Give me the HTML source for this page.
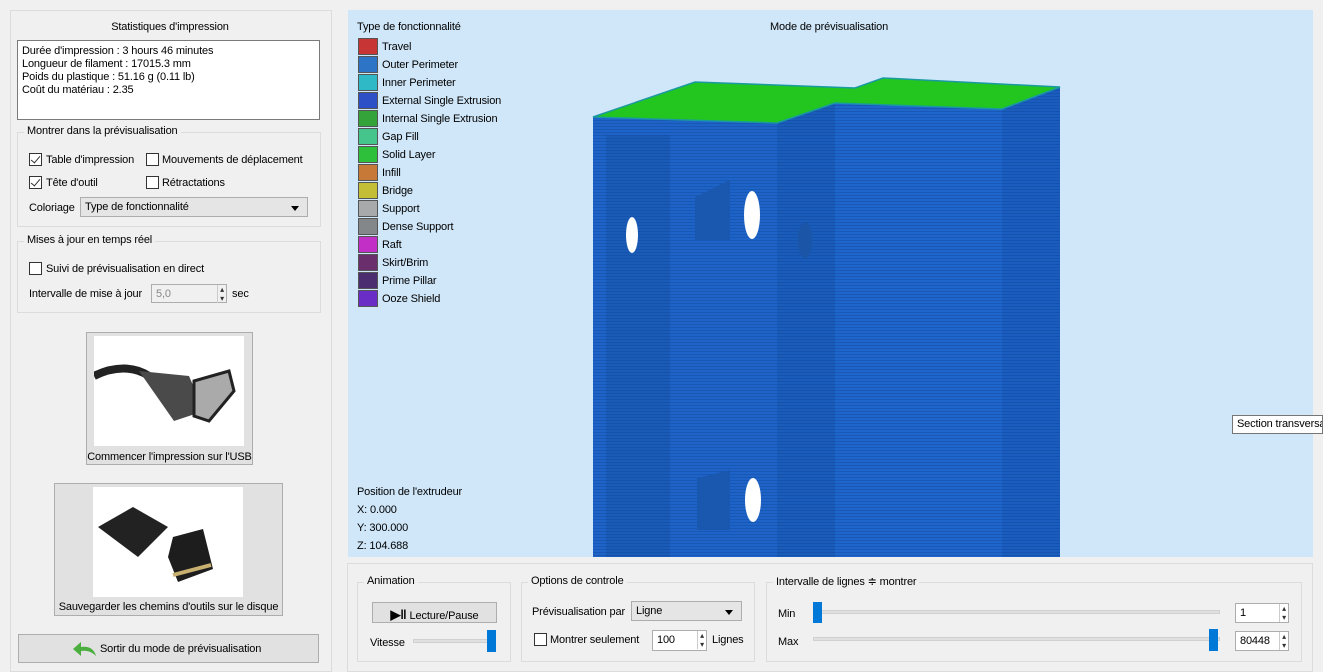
<!DOCTYPE html>
<html><head><meta charset="utf-8"><style>
*{box-sizing:border-box}
body{margin:0;width:1323px;height:672px;background:#f0f0f0;font-family:"Liberation Sans",sans-serif;font-size:11px;letter-spacing:-0.15px;color:#000;position:relative;overflow:hidden}
.a{position:absolute;white-space:nowrap}
.grp{position:absolute;border:1px solid #dcdcdc}
.gl{position:absolute;background:#f0f0f0;padding:0 3px;top:-8px;left:6px;white-space:nowrap}
.cb{position:absolute;width:13px;height:13px;border:1px solid #333;background:#fff}
.cb.on::after{content:"";position:absolute;left:3px;top:0px;width:4px;height:8px;border:solid #333;border-width:0 1.5px 1.5px 0;transform:rotate(40deg)}
.sel{position:absolute;border:1px solid #adadad;background:#e5e5e5;padding:3px 4px}
.sel::after{content:"";position:absolute;right:8px;top:8px;border:4px solid transparent;border-top:5px solid #000;border-bottom:0}
.spin{position:absolute;border:1px solid #adadad;background:#fff;padding:3px 4px}
.spin::after{content:"▴\A▾";white-space:pre;position:absolute;right:2px;top:0;font-size:8px;line-height:9px;border-left:1px solid #ccc;padding-left:2px;color:#333}
.leg{position:absolute;left:358px;width:20px;height:17px;border:1px solid #555}
.lt{position:absolute;left:382px;white-space:nowrap}
</style></head><body>
<div class="a" style="left:10px;top:10px;width:322px;height:662px;border:1px solid #dcdcdc"></div>
<div class="a" style="left:0;top:21px;width:340px;text-align:center">Statistiques d'impression</div>
<div class="a" style="left:17px;top:40px;width:303px;height:80px;border:1px solid #7a7a7a;background:#fff;padding:4px 4px;line-height:13px">Durée d'impression : 3 hours 46 minutes<br>Longueur de filament : 17015.3 mm<br>Poids du plastique : 51.16 g (0.11 lb)<br>Coût du matériau : 2.35</div>
<div class="grp" style="left:17px;top:132px;width:304px;height:95px"><span class="gl">Montrer dans la prévisualisation</span></div>
<div class="cb on" style="left:29px;top:153px"></div><div class="a" style="left:46px;top:154px">Table d'impression</div>
<div class="cb" style="left:146px;top:153px"></div><div class="a" style="left:162px;top:154px">Mouvements de déplacement</div>
<div class="cb on" style="left:29px;top:176px"></div><div class="a" style="left:46px;top:177px">Tête d'outil</div>
<div class="cb" style="left:146px;top:176px"></div><div class="a" style="left:162px;top:177px">Rétractations</div>
<div class="a" style="left:29px;top:202px">Coloriage</div>
<div class="sel" style="left:80px;top:197px;width:228px;height:20px">Type de fonctionnalité</div>
<div class="grp" style="left:17px;top:241px;width:304px;height:72px"><span class="gl">Mises à jour en temps réel</span></div>
<div class="cb" style="left:29px;top:262px"></div><div class="a" style="left:46px;top:263px">Suivi de prévisualisation en direct</div>
<div class="a" style="left:29px;top:288px">Intervalle de mise à jour</div>
<div class="spin" style="left:151px;top:284px;width:76px;height:19px;background:#f0f0f0;color:#888">5,0</div>
<div class="a" style="left:232px;top:288px">sec</div>
<div class="a" style="left:86px;top:332px;width:167px;height:133px;border:1px solid #adadad;background:#e1e1e1"></div>
<div class="a" style="left:94px;top:336px;width:150px;height:110px;background:#fff">
<svg width="150" height="110"><path d="M0 40 C20 30 40 30 55 40" stroke="#222" stroke-width="8" fill="none"/><path d="M45 35 L95 40 L110 75 L80 85 Z" fill="#4a4a4a"/><path d="M100 45 L135 35 L140 55 L115 85 L100 80Z" fill="#aaa" stroke="#222" stroke-width="3"/></svg></div>
<div class="a" style="left:86px;top:451px;width:167px;text-align:center">Commencer l'impression sur l'USB</div>
<div class="a" style="left:54px;top:483px;width:229px;height:133px;border:1px solid #adadad;background:#e1e1e1"></div>
<div class="a" style="left:93px;top:487px;width:150px;height:110px;background:#fff">
<svg width="150" height="110"><path d="M5 40 L40 20 L75 40 L45 70 Z" fill="#222"/><path d="M80 50 L110 42 L120 82 L85 95 L75 70Z" fill="#1d1d1d"/><path d="M80 88 L118 78" stroke="#c8b070" stroke-width="4"/></svg></div>
<div class="a" style="left:54px;top:601px;width:229px;text-align:center">Sauvegarder les chemins d'outils sur le disque</div>
<div class="a" style="left:18px;top:634px;width:301px;height:29px;border:1px solid #adadad;background:#e1e1e1"></div>
<svg class="a" style="left:72px;top:640px" width="26" height="18"><path d="M24 16 C22 8 16 6 9 7 L9 2 L1 9 L9 16 L9 11 C15 10 20 12 24 16Z" fill="#4cae3f"/></svg>
<div class="a" style="left:100px;top:643px">Sortir du mode de prévisualisation</div>

<div class="a" style="left:348px;top:10px;width:965px;height:547px;background:#d0e7f9"></div>
<div class="a" style="left:357px;top:21px">Type de fonctionnalité</div>
<div class="a" style="left:770px;top:21px">Mode de prévisualisation</div>
<div class="leg" style="top:38px;background:#c73535"></div><div class="lt" style="top:41px">Travel</div>
<div class="leg" style="top:56px;background:#2e74c6"></div><div class="lt" style="top:59px">Outer Perimeter</div>
<div class="leg" style="top:74px;background:#2fb9c6"></div><div class="lt" style="top:77px">Inner Perimeter</div>
<div class="leg" style="top:92px;background:#2e50c6"></div><div class="lt" style="top:95px">External Single Extrusion</div>
<div class="leg" style="top:110px;background:#34a33a"></div><div class="lt" style="top:113px">Internal Single Extrusion</div>
<div class="leg" style="top:128px;background:#45c48c"></div><div class="lt" style="top:131px">Gap Fill</div>
<div class="leg" style="top:146px;background:#2ec03a"></div><div class="lt" style="top:149px">Solid Layer</div>
<div class="leg" style="top:164px;background:#c77a37"></div><div class="lt" style="top:167px">Infill</div>
<div class="leg" style="top:182px;background:#c4be37"></div><div class="lt" style="top:185px">Bridge</div>
<div class="leg" style="top:200px;background:#a7a9ab"></div><div class="lt" style="top:203px">Support</div>
<div class="leg" style="top:218px;background:#84878a"></div><div class="lt" style="top:221px">Dense Support</div>
<div class="leg" style="top:236px;background:#c12fc6"></div><div class="lt" style="top:239px">Raft</div>
<div class="leg" style="top:254px;background:#6a2e6c"></div><div class="lt" style="top:257px">Skirt/Brim</div>
<div class="leg" style="top:272px;background:#4a2e70"></div><div class="lt" style="top:275px">Prime Pillar</div>
<div class="leg" style="top:290px;background:#6a2ec6"></div><div class="lt" style="top:293px">Ooze Shield</div>
<svg class="a" style="left:348px;top:10px" width="965" height="547">
<defs><pattern id="st" width="4" height="3" patternUnits="userSpaceOnUse"><rect width="4" height="1" fill="#0d3f8f" opacity="0.35"/></pattern></defs>
<g transform="translate(-348,-10)">
<polygon points="593,117 777,123 777,557 593,557" fill="#1e64c8"/>
<polygon points="777,123 835,103 835,557 777,557" fill="#1a5cba"/>
<polygon points="835,103 1002,109 1002,557 835,557" fill="#1e66cc"/>
<polygon points="1002,109 1060,87 1060,557 1002,557" fill="#1a5dbf"/>
<polygon points="606,135 670,135 670,557 606,557" fill="#1a5bb8"/>
<polygon points="593,117 777,123 835,103 1002,109 1060,87 1060,557 593,557" fill="url(#st)"/>
<polygon points="593,117 695,82 855,88 883,78 1060,87 1002,109 835,103 777,123" fill="#22c61e" stroke="#1a9aa0" stroke-width="1.5"/>
<ellipse cx="632" cy="235" rx="6" ry="18" fill="#fff"/>
<ellipse cx="752" cy="215" rx="8" ry="24" fill="#fff"/>
<ellipse cx="805" cy="240" rx="7" ry="18" fill="#1a55a8"/>
<ellipse cx="753" cy="500" rx="8" ry="22" fill="#fff"/>
<polygon points="695,197 730,180 730,240 695,240" fill="#1a58b0"/>
<polygon points="697,478 730,470 730,530 697,530" fill="#1a58b0"/>
</g></svg>
<div class="a" style="left:357px;top:483px;line-height:18px">Position de l'extrudeur<br>X: 0.000<br>Y: 300.000<br>Z: 104.688</div>
<div class="a" style="left:1232px;top:415px;width:91px;height:19px;border:1px solid #767676;background:#fff;padding:2px 4px;white-space:nowrap;overflow:hidden">Section transversale</div>

<div class="a" style="left:347px;top:563px;width:966px;height:109px;border:1px solid #dcdcdc"></div>
<div class="grp" style="left:357px;top:582px;width:154px;height:80px"><span class="gl">Animation</span></div>
<div class="a" style="left:372px;top:602px;width:125px;height:21px;border:1px solid #adadad;background:#e1e1e1;text-align:center;padding-top:4px"><b style="font-size:13px">▶‖</b> Lecture/Pause</div>
<div class="a" style="left:370px;top:637px">Vitesse</div>
<div class="a" style="left:413px;top:639px;width:82px;height:4px;background:#e0e0e0;border:1px solid #d0d0d0"></div>
<div class="a" style="left:487px;top:630px;width:9px;height:22px;background:#0078d7"></div>
<div class="grp" style="left:521px;top:582px;width:234px;height:80px"><span class="gl">Options de controle</span></div>
<div class="a" style="left:532px;top:606px">Prévisualisation par</div>
<div class="sel" style="left:631px;top:601px;width:111px;height:20px">Ligne</div>
<div class="cb" style="left:534px;top:633px"></div><div class="a" style="left:550px;top:634px">Montrer seulement</div>
<div class="spin" style="left:652px;top:630px;width:55px;height:21px">100</div>
<div class="a" style="left:712px;top:634px">Lignes</div>
<div class="grp" style="left:766px;top:582px;width:536px;height:80px"><span class="gl">Intervalle de lignes ≑ montrer</span></div>
<div class="a" style="left:778px;top:608px">Min</div>
<div class="a" style="left:815px;top:610px;width:405px;height:4px;background:#e0e0e0;border:1px solid #d0d0d0"></div>
<div class="a" style="left:813px;top:602px;width:9px;height:21px;background:#0078d7"></div>
<div class="spin" style="left:1235px;top:603px;width:54px;height:20px">1</div>
<div class="a" style="left:778px;top:636px">Max</div>
<div class="a" style="left:813px;top:637px;width:407px;height:4px;background:#e0e0e0;border:1px solid #d0d0d0"></div>
<div class="a" style="left:1209px;top:629px;width:9px;height:22px;background:#0078d7"></div>
<div class="spin" style="left:1235px;top:631px;width:54px;height:20px">80448</div>
</body></html>
